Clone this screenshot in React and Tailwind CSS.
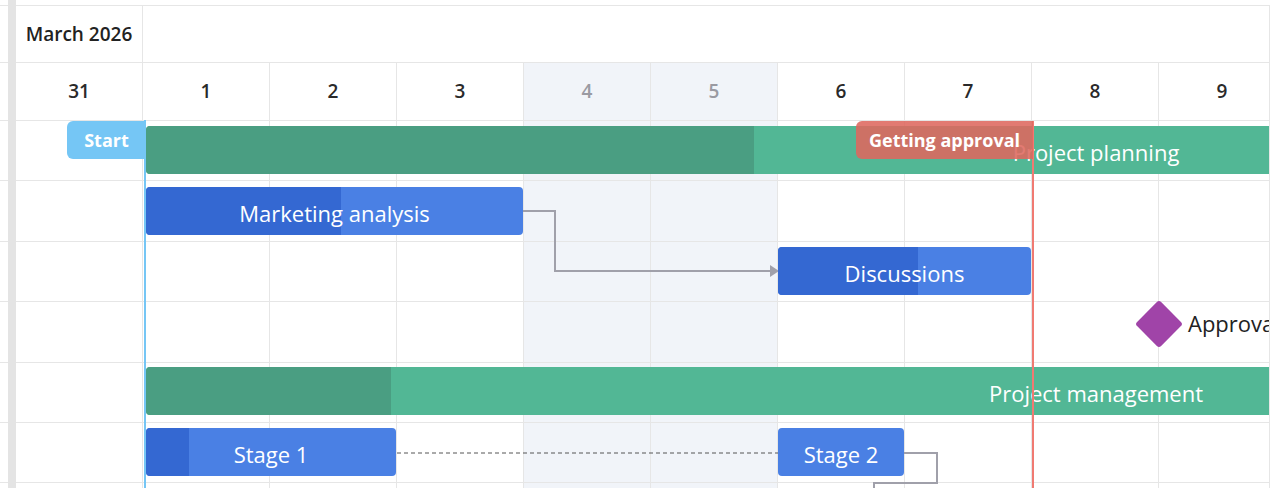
const days = [
  { label: '31' },
  { label: '1' },
  { label: '2' },
  { label: '3' },
  { label: '4', weekend: true },
  { label: '5', weekend: true },
  { label: '6' },
  { label: '7' },
  { label: '8' },
  { label: '9' },
];

const rowCount = 7;

const bars = [
  {
    key: 'planning',
    left: 146,
    top: 126,
    width: 1900,
    progress: 608,
    color: 'bg-[#52b795]',
    dark: 'bg-[#4a9e82]',
    text: 'Project planning',
  },
  {
    key: 'marketing',
    left: 146,
    top: 187,
    width: 377,
    progress: 195,
    color: 'bg-[#4a80e4]',
    dark: 'bg-[#3468d2]',
    text: 'Marketing analysis',
  },
  {
    key: 'discussions',
    left: 778,
    top: 247,
    width: 253,
    progress: 140,
    color: 'bg-[#4a80e4]',
    dark: 'bg-[#3468d2]',
    text: 'Discussions',
  },
  {
    key: 'management',
    left: 146,
    top: 367,
    width: 1900,
    progress: 245,
    color: 'bg-[#52b795]',
    dark: 'bg-[#4a9e82]',
    text: 'Project management',
  },
  {
    key: 'stage1',
    left: 146,
    top: 428,
    width: 250,
    progress: 43,
    color: 'bg-[#4a80e4]',
    dark: 'bg-[#3468d2]',
    text: 'Stage 1',
  },
  {
    key: 'stage2',
    left: 778,
    top: 428,
    width: 126,
    progress: 0,
    color: 'bg-[#4a80e4]',
    dark: 'bg-[#3468d2]',
    text: 'Stage 2',
  },
];

const Bar = ({ bar }) => (
  <div
    className={`absolute h-[48px] rounded-[4px] overflow-hidden ${bar.color}`}
    style={{ left: bar.left, top: bar.top, width: bar.width }}
  >
    {bar.progress > 0 && (
      <div className={`absolute left-0 top-0 h-full ${bar.dark}`} style={{ width: bar.progress }} />
    )}
    <div className="relative flex h-full items-center justify-center pt-[3px] text-[22px] leading-none text-white">
      {bar.text}
    </div>
  </div>
);

const App = () => {
  return (
    <div
      className="relative w-[1280px] h-[488px] overflow-hidden bg-white"
      style={{ fontFamily: '"Open Sans", "Noto Sans", sans-serif' }}
    >
      <div className="flex h-full">
        {/* collapsed task grid */}
        <div className="w-[8px] shrink-0 pt-[5px]">
          <div className="border-t border-[#e6e6e6]">
            <div className="h-[57px] border-b border-[#e6e6e6]" />
            <div className="h-[58px] border-b border-[#e6e6e6]" />
            {Array.from({ length: rowCount }).map((_, i) => (
              <div key={i} className="h-[60.4px] border-b border-[#e6e6e6]" />
            ))}
          </div>
        </div>
        <div className="w-[8px] shrink-0 bg-[#e4e4e4]" />

        {/* timeline */}
        <div className="relative w-[1254px] shrink-0 overflow-hidden pt-[5px]">
          <div className="w-[1270px] border-t border-[#e6e6e6]">
            <div className="flex h-[57px] border-b border-[#e6e6e6]">
              <div className="flex w-[127px] items-center justify-center border-r border-[#e6e6e6] text-[19px] font-semibold text-[#222]">
                March 2026
              </div>
              <div className="flex-1" />
            </div>
            <div className="flex h-[58px] border-b border-[#e6e6e6]">
              {days.map((d) => (
                <div
                  key={d.label}
                  className={`flex w-[127px] shrink-0 items-center justify-center border-r border-[#e6e6e6] text-[19px] font-semibold ${
                    d.weekend ? 'bg-[#f1f4f9] text-[#9a9aa2]' : 'text-[#2a2a2a]'
                  }`}
                >
                  {d.label}
                </div>
              ))}
            </div>
            {Array.from({ length: rowCount }).map((_, r) => (
              <div key={r} className="flex h-[60.4px] border-b border-[#e6e6e6]">
                {days.map((d) => (
                  <div
                    key={d.label}
                    className={`h-full w-[127px] shrink-0 border-r border-[#e6e6e6] ${d.weekend ? 'bg-[#f1f4f9]' : ''}`}
                  />
                ))}
              </div>
            ))}
          </div>
          {/* right edge of the scroll area */}
          <div className="absolute right-0 top-[5px] bottom-0 w-px bg-[#e6e6e6]" />
        </div>
      </div>

      {/* gantt canvas */}
      <div className="absolute left-0 top-0 h-full w-[1269px] overflow-hidden">
        <svg className="absolute left-0 top-0" width="1269" height="488">
          <path d="M523 211 H555 V271 H770" fill="none" stroke="#a0a0aa" strokeWidth="2" />
          <polygon points="770,265 779,271 770,277" fill="#a0a0aa" />
          <path d="M397 453 H778" fill="none" stroke="#555" strokeWidth="1" strokeDasharray="4 3" />
          <path d="M904 453 H937 V483 H874 V492" fill="none" stroke="#a0a0aa" strokeWidth="2" />
        </svg>

        {bars.map((b) => (
          <Bar key={b.key} bar={b} />
        ))}

        {/* milestone */}
        <div className="absolute left-[1142px] top-[307px] h-[34px] w-[34px] rotate-45 rounded-[3px] bg-[#a044a8]" />
        <div className="absolute left-[1188px] top-[309px] whitespace-nowrap text-[22px] leading-[28px] text-[#222]">
          Approval
        </div>

        {/* markers */}
        <div className="absolute left-[144px] top-[120px] h-[368px] w-[2px] bg-[#75c6f5]" />
        <div className="absolute left-[67px] top-[121px] flex h-[38px] w-[79px] items-center justify-center rounded-l-[6px] bg-[#75c6f5] text-[18px] font-bold text-white">
          Start
        </div>

        <div className="absolute left-[1032px] top-[121px] h-[367px] w-[2px] bg-[#f07a72]" />
        <div className="absolute left-[856px] top-[121px] flex h-[38px] w-[177px] items-center justify-center rounded-l-[6px] bg-[rgba(222,104,94,0.88)] text-[18px] font-bold text-white">
          Getting approval
        </div>
      </div>
    </div>
  );
};

export default App;
